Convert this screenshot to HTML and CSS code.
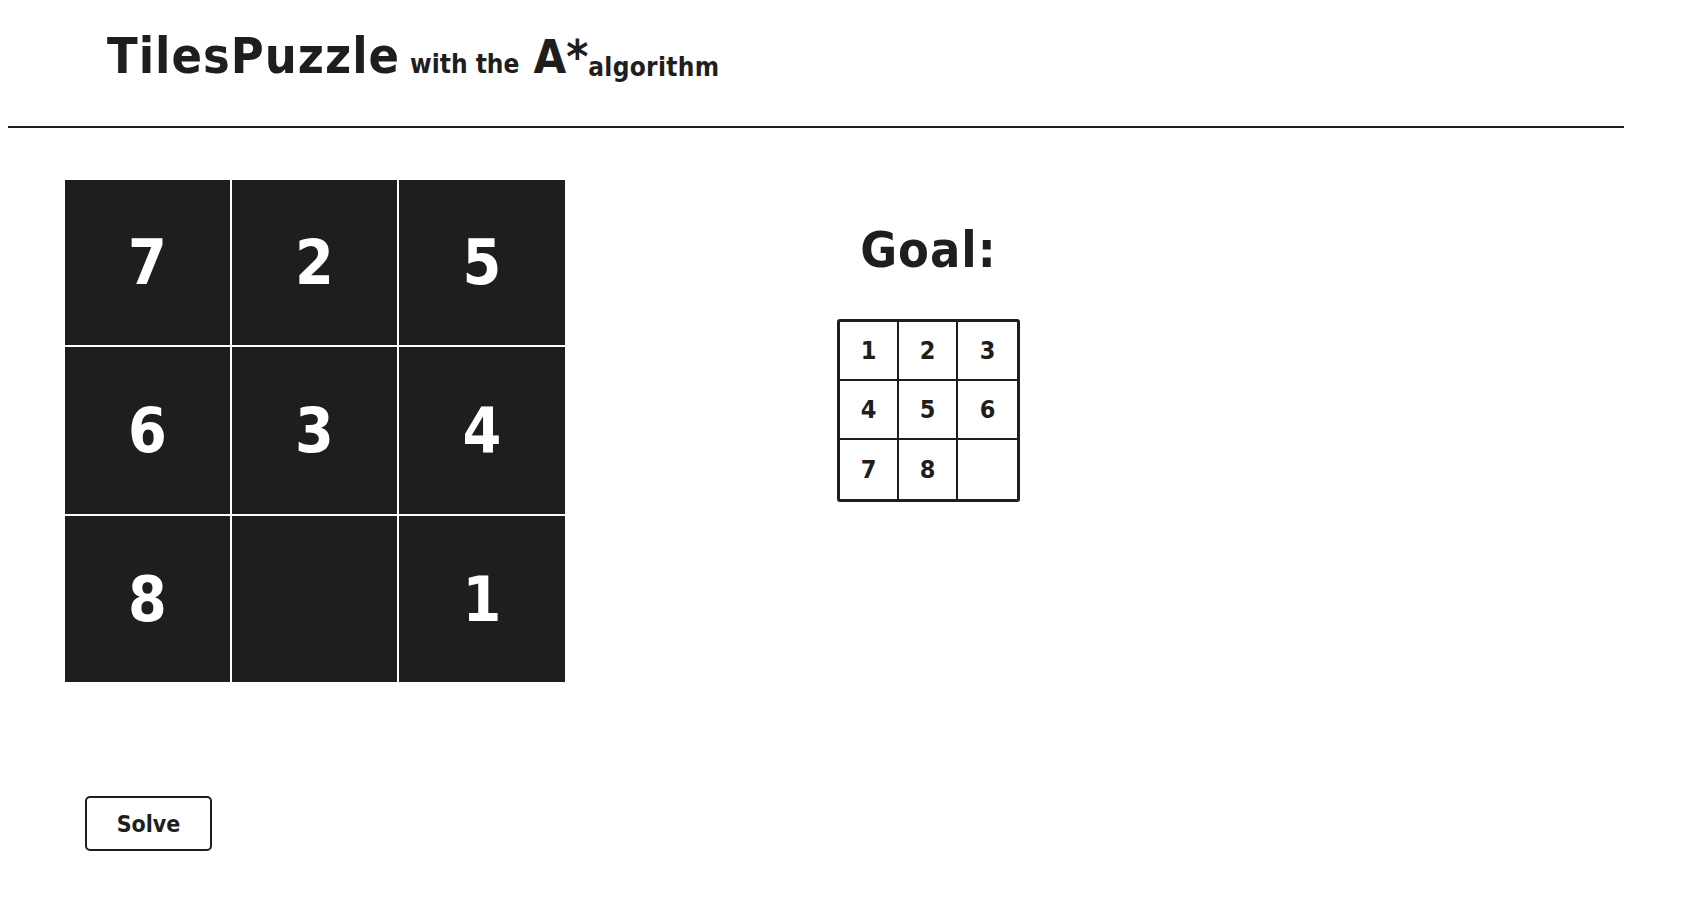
FILE: index.html
```html
<!DOCTYPE html>
<html>
<head>
<meta charset="utf-8">
<link rel="stylesheet" href="styles.css">
</head>
<body>
<header class="header">
  <h1 class="title"><span class="big">TilesPuzzle</span> <span class="small">with the</span> <span class="astar">A*</span><span class="small algo">algorithm</span></h1>
</header>
<hr class="rule">
<main class="main">
  <section class="left">
    <div class="board">
      <div class="tile">7</div>
      <div class="tile">2</div>
      <div class="tile">5</div>
      <div class="tile">6</div>
      <div class="tile">3</div>
      <div class="tile">4</div>
      <div class="tile">8</div>
      <div class="tile"></div>
      <div class="tile">1</div>
    </div>
    <button class="solve">Solve</button>
  </section>
  <section class="right">
    <h2 class="goal-title">Goal:</h2>
    <div class="goal">
      <div class="cell">1</div>
      <div class="cell">2</div>
      <div class="cell">3</div>
      <div class="cell">4</div>
      <div class="cell">5</div>
      <div class="cell">6</div>
      <div class="cell">7</div>
      <div class="cell">8</div>
      <div class="cell"></div>
    </div>
  </section>
</main>
</body>
</html>
```

FILE: styles.css
```css
* { box-sizing: border-box; }
body {
  margin: 0;
  background: #fff;
  color: #1e1e1e;
  font-family: "DejaVu Sans Condensed", "DejaVu Sans", sans-serif;
  font-stretch: condensed;
}
.header {
  padding: 31px 0 0 107px;
  height: 126px;
}
.title {
  margin: 0;
  font-weight: bold;
  line-height: 1;
  white-space: nowrap;
}
.big {
  font-size: 50px;
  letter-spacing: 1px;
}
.small {
  font-size: 26px;
}
.astar {
  font-size: 47px;
  margin-left: 4px;
}
.algo {
  position: relative;
  top: 3px;
  letter-spacing: 0.3px;
}
.rule {
  margin: 0 0 0 8px;
  width: 1616px;
  border: 0;
  border-top: 2px solid #1e1e1e;
}
.main {
  display: flex;
  padding: 52px 0 0 65px;
}
.left {
  display: flex;
  flex-direction: column;
}
.board {
  display: grid;
  grid-template-columns: 165px 165px 166px;
  grid-template-rows: 165px 167px 166px;
  gap: 2px;
  width: 500px;
}
.tile {
  background: #1e1e1e;
  color: #fff;
  font-weight: bold;
  font-size: 62px;
  display: flex;
  align-items: center;
  justify-content: center;
}
.solve {
  margin: 114px 0 0 20px;
  width: 127px;
  height: 55px;
  background: #fff;
  border: 2px solid #1e1e1e;
  border-radius: 5px;
  font-family: inherit;
  font-stretch: condensed;
  font-weight: bold;
  font-size: 23px;
  color: #1e1e1e;
  padding: 0;
}
.right {
  margin-left: 272px;
  display: flex;
  flex-direction: column;
  align-items: center;
}
.goal-title {
  margin: 45px 0 0;
  font-size: 50px;
  line-height: 1;
  letter-spacing: 1px;
  font-weight: bold;
}
.goal {
  margin-top: 44px;
  display: grid;
  grid-template-columns: repeat(3, 1fr);
  grid-template-rows: repeat(3, 1fr);
  width: 183px;
  height: 183px;
  border: 3px solid #1e1e1e;
  border-radius: 3px;
}
.cell {
  border-right: 2px solid #1e1e1e;
  border-bottom: 2px solid #1e1e1e;
  display: flex;
  align-items: center;
  justify-content: center;
  font-weight: bold;
  font-size: 25px;
}
.cell:nth-child(3n) { border-right: 0; }
.cell:nth-child(n+7) { border-bottom: 0; }
```
